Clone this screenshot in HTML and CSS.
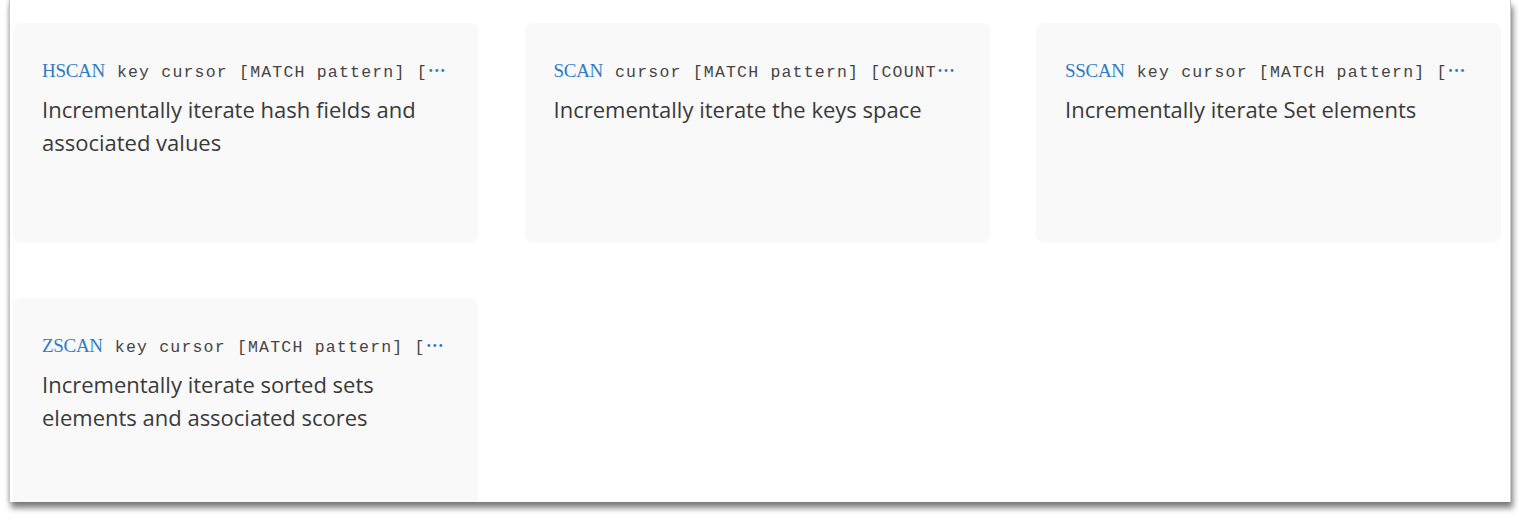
FILE: index.html
```html
<!DOCTYPE html>
<html lang="en">
<head>
<meta charset="utf-8">
<title>Scan commands</title>
<link rel="stylesheet" href="styles.css">
</head>
<body>
<div class="panel">
  <div class="grid">
    <div class="card">
      <div class="cmd"><span class="name">HSCAN</span><span class="args">key cursor [MATCH pattern] [COUNT count] [NOVALUES]</span></div>
      <p class="desc">Incrementally iterate hash fields and associated values</p>
    </div>
    <div class="card">
      <div class="cmd"><span class="name">SCAN</span><span class="args">cursor [MATCH pattern] [COUNT count] [TYPE type]</span></div>
      <p class="desc">Incrementally iterate the keys space</p>
    </div>
    <div class="card">
      <div class="cmd"><span class="name">SSCAN</span><span class="args">key cursor [MATCH pattern] [COUNT count]</span></div>
      <p class="desc">Incrementally iterate Set elements</p>
    </div>
    <div class="card">
      <div class="cmd"><span class="name">ZSCAN</span><span class="args">key cursor [MATCH pattern] [COUNT count]</span></div>
      <p class="desc">Incrementally iterate sorted sets elements and associated scores</p>
    </div>
  </div>
</div>
</body>
</html>
```

FILE: styles.css
```css
html, body {
  margin: 0;
  padding: 0;
  background: #ffffff;
}

body {
  padding-bottom: 16px;
}

.panel {
  margin-left: 9px;
  width: 1502px;
  height: 502px;
  overflow: hidden;
  background: #ffffff;
  border-left: 1px solid #c8c8c8;
  border-right: 1px solid #c8c8c8;
  box-sizing: border-box;
  box-shadow: 2px 6px 6px rgba(0, 0, 0, 0.5), -1px 0 3px rgba(0, 0, 0, 0.15);
  padding: 23px 0 0 3px;
}

.grid {
  display: grid;
  grid-template-columns: repeat(3, 465px);
  column-gap: 46.5px;
  row-gap: 55px;
}

.card {
  background: #f9f9f9;
  border-radius: 8px;
  height: 220px;
  box-sizing: border-box;
  padding: 28px 28px 30px 29px;
}

.cmd {
  color: #2f7cc6;
  font-family: "Noto Sans CJK SC", "Liberation Mono", monospace;
  font-size: 18px;
  font-weight: 700;
  line-height: 36px;
  white-space: nowrap;
  overflow: hidden;
  text-overflow: ellipsis;
}

.name {
  font-family: "Liberation Serif", serif;
  font-size: 19px;
  font-weight: 400;
  letter-spacing: -0.3px;
  color: #2f7cc6;
  margin-right: 12px;
}

.args {
  font-family: "Liberation Mono", monospace;
  font-size: 16.5px;
  font-weight: 400;
  letter-spacing: 1.2px;
  color: #444444;
}

.desc {
  margin: 2px 0 0;
  font-family: "Open Sans", sans-serif;
  font-size: 22px;
  line-height: 33px;
  color: #3a3a3a;
}
```
